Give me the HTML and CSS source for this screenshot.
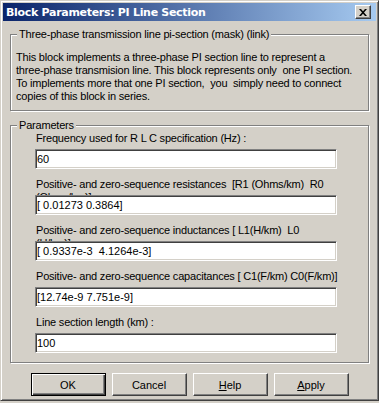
FILE: index.html
```html
<!DOCTYPE html>
<html>
<head>
<meta charset="utf-8">
<link rel="stylesheet" href="styles.css">
</head>
<body>
<div class="window">
    <div class="titlebar">
        <span class="title">Block Parameters: PI Line Section</span>
        <button class="close" title="Close">
            <svg width="8" height="7" viewBox="0 0 8 7"><path d="M0 0h2l2 2.2L6 0h2L5 3.5 8 7H6L4 4.8 2 7H0l3-3.5z" fill="#000"/></svg>
        </button>
    </div>

    <div class="client">
        <fieldset class="group desc">
            <legend>Three-phase transmission line pi-section (mask) (link)</legend>
            <p>This block implements a three-phase PI section line to represent a<br>
            three-phase transmision line. This block represents only &nbsp;one PI section.<br>
            To implements more that one PI section, &nbsp;you &nbsp;simply need to connect<br>
            copies of this block in series.</p>
        </fieldset>

        <fieldset class="group params">
            <legend>Parameters</legend>
            <div class="field">
                <label>Frequency used for R L C specification (Hz) :</label>
                <input type="text" value="60">
            </div>
            <div class="field">
                <label>Positive- and zero-sequence resistances &nbsp;[R1 (Ohms/km) &nbsp;R0<br>(Ohms/km)]</label>
                <input type="text" value="[ 0.01273 0.3864]">
            </div>
            <div class="field">
                <label>Positive- and zero-sequence inductances [ L1(H/km) &nbsp;L0<br>(H/km)]</label>
                <input type="text" value="[ 0.9337e-3  4.1264e-3]">
            </div>
            <div class="field">
                <label>Positive- and zero-sequence capacitances [ C1(F/km) C0(F/km)]</label>
                <input type="text" value="[12.74e-9 7.751e-9]">
            </div>
            <div class="field">
                <label>Line section length (km) :</label>
                <input type="text" value="100">
            </div>
        </fieldset>

        <div class="buttons">
            <button class="btn default">OK</button>
            <button class="btn">Cancel</button>
            <button class="btn"><u>H</u>elp</button>
            <button class="btn"><u>A</u>pply</button>
        </div>
    </div>
</div>
</body>
</html>
```

FILE: styles.css
```css
* {
    box-sizing: border-box;
}

body {
    margin: 0;
    background: #d4d0c8;
    font: 11px "Liberation Sans", Arial, sans-serif;
    letter-spacing: -0.2px;
    color: #000;
}

.window {
    width: 379px;
    height: 401px;
    padding: 2px;
    background: #d4d0c8;
    border: 1px solid;
    border-color: #d4d0c8 #404040 #404040 #d4d0c8;
    box-shadow: inset 1px 1px 0 #fff, inset -1px -1px 0 #808080;
}

.titlebar {
    height: 18px;
    display: flex;
    align-items: center;
    justify-content: space-between;
    padding: 0 5px 0 3px;
    background: linear-gradient(to right, #0a246a, #a6caf0);
}

.title {
    color: #fff;
    font: bold 11px "DejaVu Sans", Verdana, sans-serif;
    letter-spacing: -0.3px;
}

.close {
    width: 16px;
    height: 14px;
    padding: 0;
    display: flex;
    align-items: center;
    justify-content: center;
    background: #d4d0c8;
    border: 1px solid;
    border-color: #fff #404040 #404040 #fff;
    box-shadow: inset -1px -1px 0 #808080;
}

.client {
    padding: 0 7px;
}

.group {
    margin: 0;
    border: 1px solid #808080;
    box-shadow: inset 1px 1px 0 #fff, 1px 1px 0 #fff;
}

.group legend {
    padding: 0 2px;
    margin-left: 1px;
    line-height: 13px;
    background: #d4d0c8;
}

.desc {
    margin-top: 7px;
    padding: 10px 5px 7px;
}

.desc p {
    margin: 0;
    line-height: 13px;
}

.params {
    margin-top: 8px;
    padding: 0 5px 9px;
}

.field {
    margin-left: 19px;
    width: 304px;
}

.field + .field {
    margin-top: 9px;
}

.field label {
    display: block;
    height: 17px;
    overflow: hidden;
    line-height: 13px;
    padding-left: 1px;
}

.field input {
    display: block;
    width: 302px;
    height: 20px;
    padding: 0 1px;
    font: inherit;
    color: #000;
    background: #fff;
    border: 1px solid;
    border-color: #808080 #fff #fff #808080;
    box-shadow: inset 1px 1px 0 #404040, inset -1px -1px 0 #d4d0c8;
    outline: none;
}

.buttons {
    display: flex;
    justify-content: center;
    gap: 6px;
    margin-top: 10px;
}

.btn {
    width: 75px;
    height: 23px;
    padding: 0;
    font: inherit;
    color: #000;
    background: #d4d0c8;
    border: 1px solid;
    border-color: #fff #404040 #404040 #fff;
    box-shadow: inset -1px -1px 0 #808080;
}

.btn.default {
    border-color: #000;
    box-shadow: inset 1px 1px 0 #fff, inset -1px -1px 0 #404040, inset -2px -2px 0 #808080;
}
```
